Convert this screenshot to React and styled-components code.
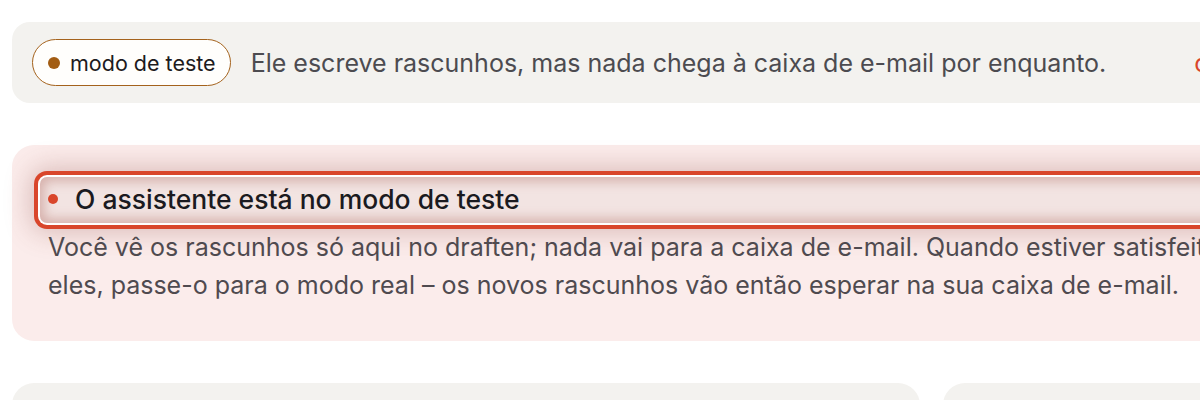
import React from 'react';
import styled, { createGlobalStyle } from 'styled-components';

const GlobalStyle = createGlobalStyle`
  html, body {
    margin: 0;
    background: #ffffff;
    overflow: hidden;
  }
  body {
    font-family: Inter, 'Noto Sans', 'Liberation Sans', sans-serif;
    -webkit-font-smoothing: antialiased;
  }
`;

const Page = styled.main`
  width: 1440px;
  box-sizing: border-box;
  padding: 22px 12px 0;
  display: flex;
  flex-direction: column;
  gap: 42px;
`;

const ModeBar = styled.section`
  display: flex;
  align-items: center;
  gap: 20px;
  padding: 17px 20px;
  background: #f3f2ef;
  border-radius: 18px;
`;

const Pill = styled.span`
  display: inline-flex;
  align-items: center;
  gap: 10px;
  height: 47px;
  box-sizing: border-box;
  padding: 0 14px 0 15px;
  border: 1.5px solid #a4621c;
  border-radius: 24px;
  background: #fffefc;
  color: #1d1b20;
  font-size: 21.5px;
  white-space: nowrap;
`;

const Dot = styled.span`
  width: ${(p) => p.$size}px;
  height: ${(p) => p.$size}px;
  border-radius: 50%;
  background: ${(p) => p.$color};
  flex: none;
`;

const BarText = styled.span`
  color: #4c4b50;
  font-size: 25px;
  white-space: nowrap;
`;

const BarLink = styled.a`
  margin-left: 68px;
  color: #d9462b;
  font-size: 25px;
  white-space: nowrap;
  text-decoration: none;
`;

const NoticeCard = styled.section`
  background: #fbeceb;
  border-radius: 22px;
  padding: 32px 36px 37px;
`;

const NoticeHeading = styled.h2`
  margin: 0 -8px;
  height: 46px;
  box-sizing: border-box;
  padding: 0 8px 3px;
  display: flex;
  align-items: center;
  gap: 17px;
  border-radius: 7px;
  background: #f2e4e2;
  box-shadow: inset 0 0 12px 4px rgba(170, 95, 85, 0.4),
    0 0 0 2px #ffffff, 0 0 0 6px #d9462b, 0 0 26px 10px rgba(140, 70, 60, 0.28);
  color: #1b1a20;
  font-size: 26.5px;
  font-weight: 500;
  white-space: nowrap;
`;

const NoticeText = styled.p`
  margin: 5px 0 0;
  max-width: 1250px;
  color: #4f4a4f;
  font-size: 25px;
  line-height: 38px;
`;

const CardRow = styled.div`
  display: grid;
  grid-template-columns: 908px 1fr;
  gap: 23px;
`;

const Card = styled.section`
  height: 200px;
  background: #f3f2ef;
  border-radius: 22px;
`;

export default function App() {
  return (
    <>
      <GlobalStyle />
      <Page>
        <ModeBar>
          <Pill>
            <Dot $size={12} $color="#a25c12" />
            modo de teste
          </Pill>
          <BarText>Ele escreve rascunhos, mas nada chega à caixa de e-mail por enquanto.</BarText>
          <BarLink href="#">colocar no modo real</BarLink>
        </ModeBar>

        <NoticeCard>
          <NoticeHeading>
            <Dot $size={10} $color="#d9462b" />
            O assistente está no modo de teste
          </NoticeHeading>
          <NoticeText>
            Você vê os rascunhos só aqui no draften; nada vai para a caixa de e-mail. Quando estiver
            satisfeito com eles, passe-o para o modo real – os novos rascunhos vão então esperar na
            sua caixa de e-mail.
          </NoticeText>
        </NoticeCard>

        <CardRow>
          <Card />
          <Card />
        </CardRow>
      </Page>
    </>
  );
}
